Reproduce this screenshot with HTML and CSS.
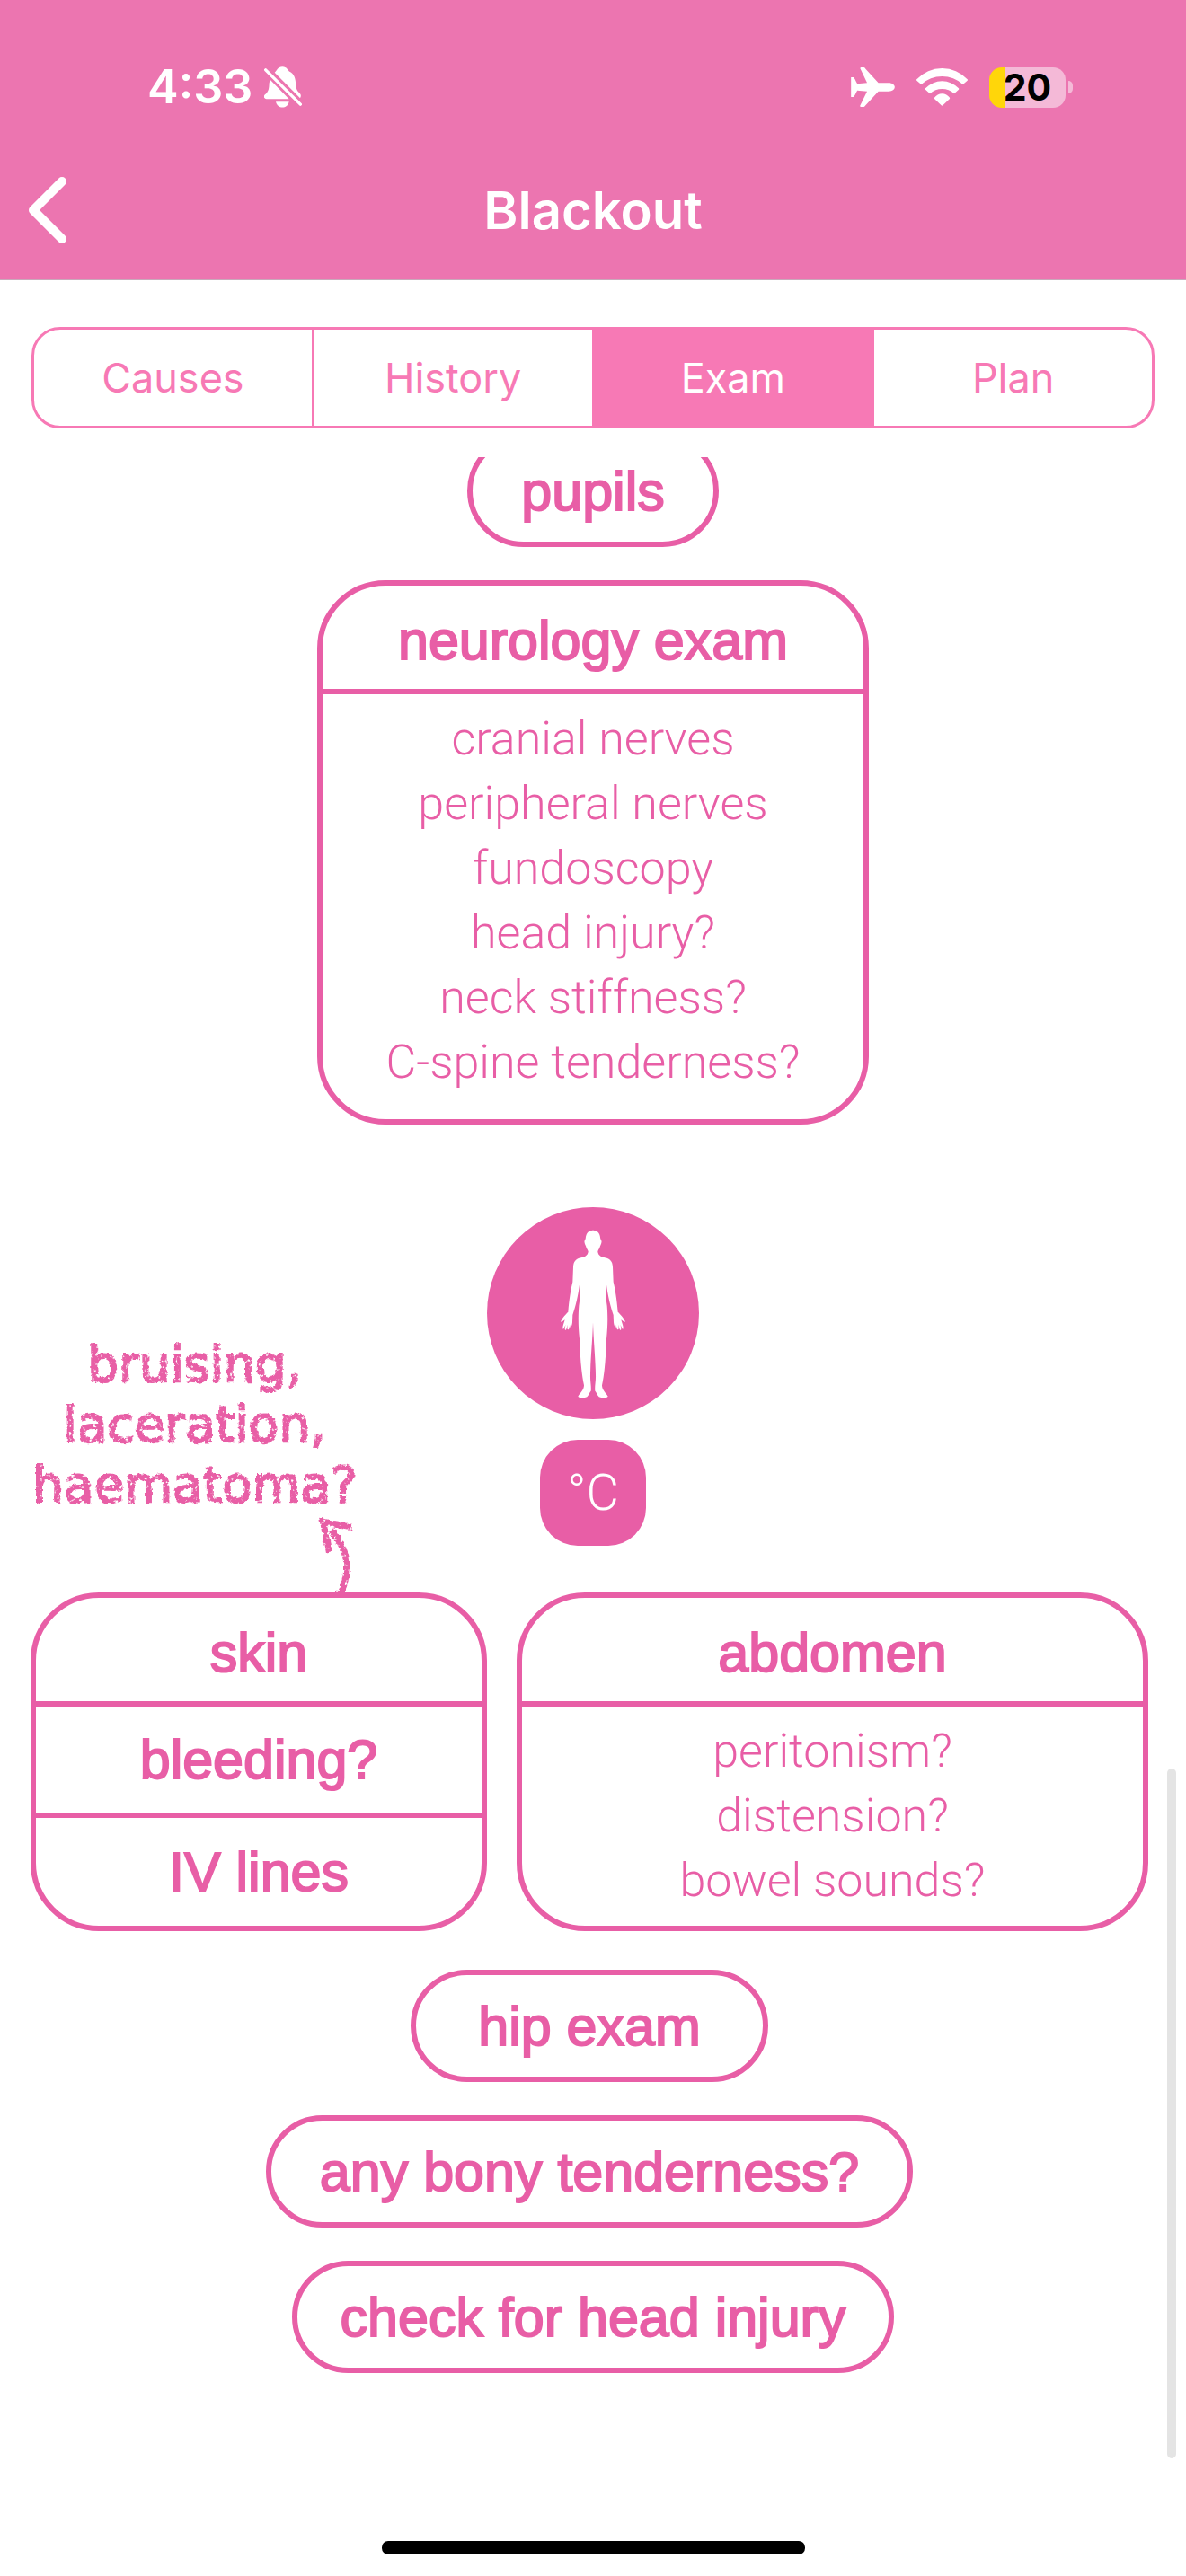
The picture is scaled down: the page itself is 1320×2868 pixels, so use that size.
FILE: index.html
```html
<!DOCTYPE html>
<html lang="en">
<head>
<meta charset="utf-8">
<meta name="viewport" content="width=device-width, initial-scale=1">
<title>Blackout</title>
<link rel="stylesheet" href="styles.css">
</head>
<body>
<header class="header">
  <div class="status">
    <div class="status-group">
      <span class="time">4:33</span>
      <svg class="icon-bell" viewBox="882 106 126 137" aria-hidden="true">
        <path d="M917 126C924 120 927 106 943 106C958 106 961 118 967 123C982 130 987 145 988 168C989 185 996 190 1003 198C1006 203 1004 209 1002 211Z"/>
        <path d="M902 150L965 214H890C880 214 880 204 884 200C898 188 898 180 899 160Z"/>
        <path d="M921 223H965C962 236 953 242 943 242C933 242 924 236 921 223Z"/>
        <path class="slash" d="M887 117L1003 232"/>
      </svg>
    </div>
    <div class="status-group status-right">
      <svg class="icon-plane" viewBox="141 108 147 133" aria-hidden="true">
        <path d="M141 141H149C153 143 156 152 162 163L195 160L172 112C171 109 174 108 178 108H184C187 108 188 111 190 113L233 160H268C280 160 288 167 288 174C288 182 280 189 268 189H233L190 236C188 238 187 241 184 241H174C171 241 171 238 172 236L195 189L162 186C156 196 153 206 149 208H141Z"/>
      </svg>
      <svg class="icon-wifi" viewBox="360 106 171 126" aria-hidden="true">
        <path d="M361 143A115 115 0 0 1 530 143Q532 145 530 147L515 160A103 103 0 0 0 376 160L361 147Q359 145 361 143Z"/>
        <path d="M390 173A76 76 0 0 1 501 173Q503 175 501 177L486 191A59 59 0 0 0 405 191L390 177Q388 175 390 173Z"/>
        <path d="M420 204A31 31 0 0 1 471 204Q472 206 471 208L448 230Q445 232 443 230L420 208Q419 206 420 204Z"/>
      </svg>
      <div class="battery"><span class="battery-level">20</span></div>
    </div>
  </div>
  <div class="navbar">
    <button class="back" type="button" aria-label="Back">
      <svg class="icon-back" viewBox="0 0 43 74" aria-hidden="true"><path d="M38 5L6 37L38 69"/></svg>
    </button>
    <h1 class="title">Blackout</h1>
  </div>
</header>

<nav class="tabs" aria-label="Sections">
  <button class="tab" type="button">Causes</button>
  <button class="tab" type="button">History</button>
  <button class="tab tab-active" type="button" aria-current="page">Exam</button>
  <button class="tab" type="button">Plan</button>
</nav>

<main class="scroller">
  <div class="content">
    <div class="pill">pupils</div>

    <section class="card card-neuro">
      <h2 class="row row-head">neurology exam</h2>
      <ul class="details">
        <li>cranial nerves</li>
        <li>peripheral nerves</li>
        <li>fundoscopy</li>
        <li>head injury?</li>
        <li>neck stiffness?</li>
        <li>C-spine tenderness?</li>
      </ul>
    </section>

    <div class="middle">
      <div class="note">
        <p class="note-text">bruising,<br>laceration,<br>haematoma?</p>
        <svg class="note-arrow" viewBox="1050 681 132 258" aria-hidden="true">
          <path d="M1095 730Q1186 830 1124 945"/>
          <path d="M1166 722L1070 703L1088 804"/>
        </svg>
      </div>
      <div class="markers">
        <svg class="figure" viewBox="66 69 708 710" role="img" aria-label="Body">
          <defs>
            <path id="half" d="M419 147H420C436 147 445 158 445 180C450 179 450 188 444 200C442 208 438 212 436 218C437 228 442 236 460 239C478 243 485 252 486 270L488 320C494 345 499 375 503 420C510 426 522 440 528 452C524 455 520 450 514 446C516 455 522 468 521 476C518 480 514 468 512 462L514 478C512 482 509 480 508 474L505 462L506 476C503 482 500 478 499 472L497 462V470C494 474 490 466 489 455L488 430C478 400 470 370 464 322C460 345 463 370 467 400C470 440 469 470 465 510C463 560 460 620 450 665C450 680 462 690 470 702C466 708 450 708 440 704C432 695 432 688 427 684C425 670 430 650 429 630C428 570 422 520 420 455H419Z"/>
          </defs>
          <circle class="figure-disc" cx="420" cy="424" r="354"/>
          <use href="#half"/>
          <use href="#half" transform="translate(840 0) scale(-1 1)"/>
        </svg>
        <div class="temp">°C</div>
      </div>
    </div>

    <div class="lower">
      <div class="pair">
        <ul class="card">
          <li class="row row-head">skin</li>
          <li class="row">bleeding?</li>
          <li class="row row-last">IV lines</li>
        </ul>
        <section class="card">
          <h2 class="row row-head">abdomen</h2>
          <ul class="details">
            <li>peritonism?</li>
            <li>distension?</li>
            <li>bowel sounds?</li>
          </ul>
        </section>
      </div>
      <div class="pill pill-wide">hip exam</div>
      <div class="pill">any bony tenderness?</div>
    </div>
    <div class="pill pill-tight">check for head injury</div>
  </div>
  <div class="thumb"></div>
</main>

<footer class="footer"><div class="home-bar"></div></footer>

<svg class="defs" aria-hidden="true">
  <filter id="chalk" x="-5%" y="-5%" width="110%" height="110%">
    <feTurbulence type="fractalNoise" baseFrequency="0.2" numOctaves="2" seed="4" result="wobble"/>
    <feDisplacementMap in="SourceGraphic" in2="wobble" scale="5" xChannelSelector="R" yChannelSelector="G" result="rough"/>
    <feTurbulence type="fractalNoise" baseFrequency="0.25" numOctaves="2" seed="9"/>
    <feColorMatrix type="matrix" values="0 0 0 0 0  0 0 0 0 0  0 0 0 0 0  6 0 0 0 -1.3" result="grain"/>
    <feComposite in="rough" in2="grain" operator="in"/>
  </filter>
</svg>
</body>
</html>
```
FILE: styles.css
```css
:root {
  --pink: #e85ea6;
  --tab: #f779b5;
  --bar: #ec75b0;
}

* { box-sizing: border-box; }

body {
  margin: 0;
  min-height: 100vh;
  display: flex;
  flex-direction: column;
  background: #fff;
  font-family: Inter, "Liberation Sans", sans-serif;
}

h1, h2, p, ul { margin: 0; padding: 0; font-weight: inherit; }
ul { list-style: none; }
svg { display: block; }
button { font: inherit; border: 0; padding: 0; background: none; cursor: pointer; }

/* header */
.header {
  background: var(--bar);
  color: #fff;
  border-bottom: 1px solid #c9a9bb;
}

.status {
  display: flex;
  justify-content: space-between;
  align-items: center;
  height: 156px;
  padding: 58px 126px 20px 164px;
}

.status-group { display: flex; align-items: center; gap: 13px; fill: #fff; }
.status-right { gap: 24px; }
.time { font-size: 52px; font-weight: 600; line-height: 64px; }
.icon-bell { width: 42px; height: 46px; }
.slash { stroke: #fff; stroke-width: 10; stroke-linecap: round; }
.icon-plane { width: 49px; height: 44px; }
.icon-wifi { width: 57px; height: 42px; }

.battery {
  display: flex;
  align-items: center;
  gap: 3px;
}
.battery-level {
  width: 85px;
  height: 45px;
  border-radius: 14px;
  background: linear-gradient(to right, #ffd60a 17px, #f4b9d7 17px);
  color: #000;
  font-size: 41px;
  font-weight: 700;
  line-height: 45px;
  text-align: center;
}
.battery::after {
  content: "";
  width: 5px;
  height: 14px;
  border-radius: 0 7px 7px 0;
  background: #f4b9d7;
}

.navbar {
  display: grid;
  grid-template-columns: 1fr auto 1fr;
  align-items: center;
  height: 155px;
  padding: 0 31px;
}
.back { justify-self: start; }
.icon-back { width: 43px; height: 74px; fill: none; stroke: #fff; stroke-width: 10; stroke-linecap: round; stroke-linejoin: round; }
.title { font-size: 58px; font-weight: 600; line-height: 72px; }

/* section tabs */
.tabs {
  display: flex;
  height: 113px;
  margin: 52px 35px 32px;
  border: 3px solid var(--tab);
  border-radius: 32px;
  overflow: hidden;
}
.tab { flex: 1 1 0; color: var(--tab); font-size: 45px; }
.tab + .tab { border-left: 3px solid var(--tab); }
.tab-active { background: var(--tab); color: #fff; }

/* scrolled content */
.scroller { position: relative; flex: 1; overflow: hidden; color: var(--pink); }

.content {
  display: flex;
  flex-direction: column;
  align-items: center;
  gap: 37px;
  margin-top: -25px;
}

.pill, .row {
  font-family: "Liberation Sans", Arial, sans-serif;
  font-size: 61px;
  line-height: 70px;
  -webkit-text-stroke: 2px var(--pink);
}

.pill {
  display: flex;
  align-items: center;
  height: 125px;
  padding: 0 54px;
  border: 6px solid var(--pink);
  border-radius: 63px;
}
.pill-wide { padding: 0 69px; }
.pill-tight { padding: 0 48px; }

.card {
  display: flex;
  flex-direction: column;
  border: 6px solid var(--pink);
  border-radius: 76px;
  text-align: center;
}
.card-neuro { width: 614px; max-width: 100%; padding-bottom: 13px; }

.row {
  display: flex;
  align-items: center;
  justify-content: center;
  height: 124px;
  border-bottom: 6px solid var(--pink);
}
.row-head { height: 121px; padding-top: 6px; }
.row-last { flex: 1; border-bottom: 0; }

.details {
  padding: 14px 0;
  font-family: Roboto, "Liberation Sans", sans-serif;
  font-size: 52px;
  font-weight: 300;
  line-height: 72px;
}

.middle {
  align-self: stretch;
  display: grid;
  grid-template-columns: 1fr auto 1fr;
  margin-top: 54px;
  padding: 0 36px;
}
.note {
  display: flex;
  flex-direction: column;
  align-self: end;
  justify-self: start;
  filter: url(#chalk);
}
.note-text {
  font-family: "DejaVu Sans", sans-serif;
  font-size: 55px;
  line-height: 67px;
  text-align: center;
  -webkit-text-stroke: 2px var(--pink);
}
.note-arrow {
  width: 44px;
  height: 86px;
  align-self: flex-end;
  fill: none;
  stroke: var(--pink);
  stroke-width: 22;
}
.markers {
  display: flex;
  flex-direction: column;
  align-items: center;
  gap: 22px;
  padding-bottom: 52px;
}
.figure { width: 236px; height: 238px; fill: #fff; }
.figure-disc { fill: var(--pink); }
.temp {
  display: grid;
  place-items: center;
  width: 118px;
  height: 118px;
  border-radius: 42px;
  background: var(--pink);
  color: #fff;
  font-family: Roboto, sans-serif;
  font-size: 56px;
  font-weight: 300;
}

.lower {
  align-self: stretch;
  display: flex;
  flex-direction: column;
  align-items: center;
  gap: 37px;
  margin-top: -37px;
  padding: 0 42px 0 34px;
}
.pair {
  align-self: stretch;
  display: grid;
  grid-template-columns: 508fr 703fr;
  gap: 33px;
  margin-bottom: 6px;
}

.thumb {
  position: absolute;
  right: 11px;
  bottom: 30px;
  width: 10px;
  height: 34%;
  border-radius: 5px;
  background: #e4e4e4;
}

.footer { display: flex; justify-content: center; padding: 62px 0 24px; }
.home-bar { width: 471px; height: 15px; border-radius: 7px; background: #000; }
.defs { position: absolute; width: 0; height: 0; }
```
